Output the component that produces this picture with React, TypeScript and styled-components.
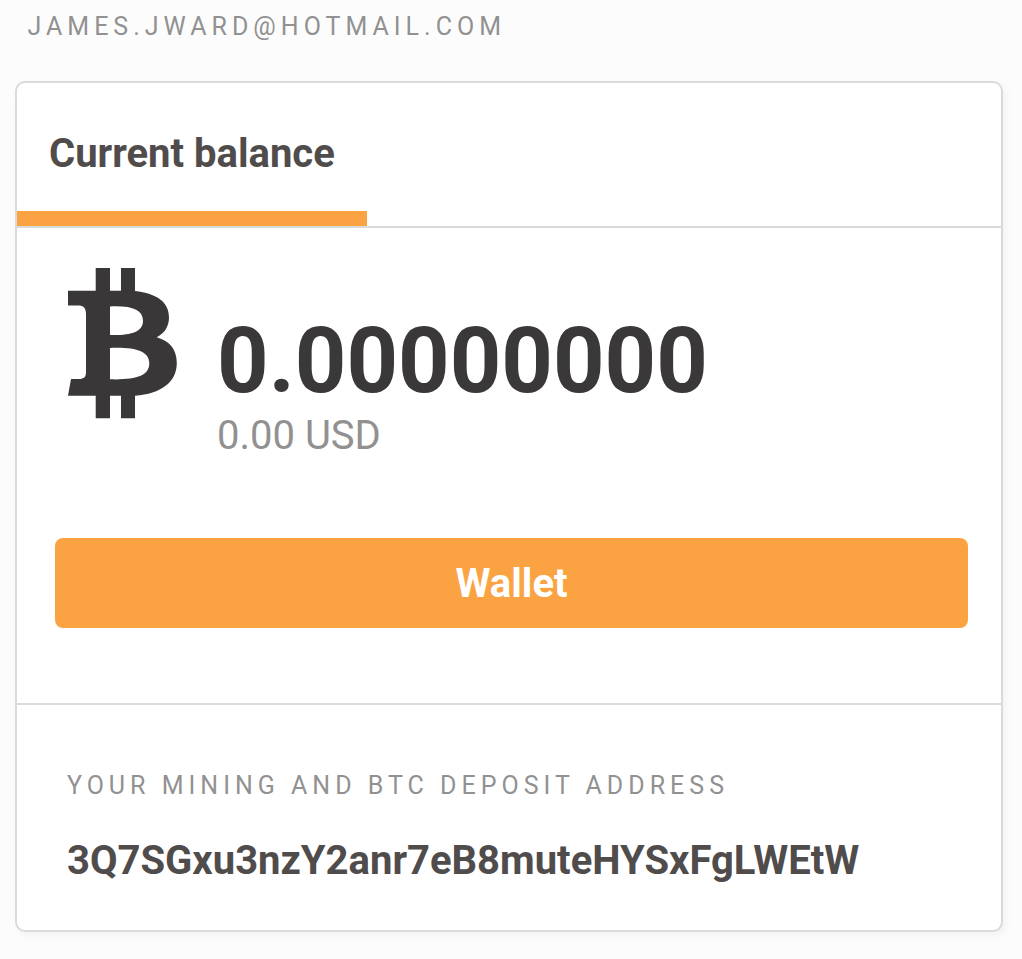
import React from 'react';
import styled, { createGlobalStyle } from 'styled-components';

const GlobalStyle = createGlobalStyle`
  * { box-sizing: border-box; }
  body { margin: 0; background: #fcfcfc; font-family: Roboto, sans-serif; overflow: hidden; }
`;

const Page = styled.main`
  height: 959px;
  padding: 12px 19px 27px 15px;
  display: flex;
  flex-direction: column;
`;

const Caption = styled.p`
  margin: 0;
  font-size: 25px;
  line-height: 30px;
  letter-spacing: 5px;
  text-transform: uppercase;
  white-space: nowrap;
  color: #929191;
`;

const Account = styled(Caption)`
  padding-left: 12.5px;
  margin-bottom: 39px;
`;

const Card = styled.section`
  flex: 1;
  display: flex;
  flex-direction: column;
  background: #fff;
  border: 2px solid #dadadb;
  border-radius: 10px;
  box-shadow: 3px 4px 8px rgba(0, 0, 0, 0.04);
`;

const Header = styled.header`
  height: 145px;
  border-bottom: 2px solid #dadadb;
`;

const Tab = styled.h2`
  width: 350px;
  height: 143px;
  margin: 0;
  padding: 47px 0 0 32px;
  border-bottom: 15px solid #fba342;
  font-size: 40px;
  line-height: 48px;
  font-weight: 700;
  color: #504c4c;
`;

const Balance = styled.div`
  display: flex;
  height: 310px;
  padding: 40px 50px 0;
`;

const Coin = styled.svg`
  width: 112px;
  height: 151px;
  fill: #3a3738;
`;

const Amounts = styled.div`
  padding: 41px 0 0 38px;
`;

const Bitcoins = styled.div`
  font-size: 90px;
  line-height: 106px;
  font-weight: 700;
  color: #3a3839;
`;

const Dollars = styled.div`
  margin-top: -3px;
  font-size: 40px;
  line-height: 48px;
  color: #929191;
`;

const WalletButton = styled.button`
  height: 90px;
  margin: 0 33px 75px 38px;
  padding: 2px 0 0;
  border: 0;
  border-radius: 8px;
  background: #fba342;
  color: #fff;
  font: 700 40px/48px Roboto, sans-serif;
`;

const Deposit = styled.footer`
  flex: 1;
  border-top: 2px solid #dadadb;
  padding: 66px 50px 0;
`;

const Address = styled.div`
  margin-top: 36px;
  font-size: 40px;
  line-height: 48px;
  font-weight: 700;
  color: #504c4c;
`;

export default function App() {
  return (
    <Page>
      <GlobalStyle />
      <Account>james.jward@hotmail.com</Account>
      <Card>
        <Header><Tab>Current balance</Tab></Header>
        <Balance>
          <Coin viewBox="0 0 112 151" aria-label="Bitcoin">
            <path fillRule="evenodd" d="M28.7 0H43V22.7H54V0H68V23C90 25.5 102 34 102 49.5C102 58 98 65 89.7 69.3C103 73 109.8 82 109.8 95C109.8 114 94 126 68 127.7V150.3H54V127.7H43V150.3H28.7V127.7H1L4 111H12C17 111 19 109 19 104V46C19 40 16.5 37.5 11 37.5H1V22.7H28.7ZM43 38.5V67C64 67.5 76 64 76 52.7C76 42 65 37.5 43 38.5ZM43 80V111.3C69 112 82.3 108 82.3 95.3C82.3 83 68 79 43 80Z" />
          </Coin>
          <Amounts>
            <Bitcoins>0.00000000</Bitcoins>
            <Dollars>0.00 USD</Dollars>
          </Amounts>
        </Balance>
        <WalletButton>Wallet</WalletButton>
        <Deposit>
          <Caption>Your mining and BTC deposit address</Caption>
          <Address>3Q7SGxu3nzY2anr7eB8muteHYSxFgLWEtW</Address>
        </Deposit>
      </Card>
    </Page>
  );
}
